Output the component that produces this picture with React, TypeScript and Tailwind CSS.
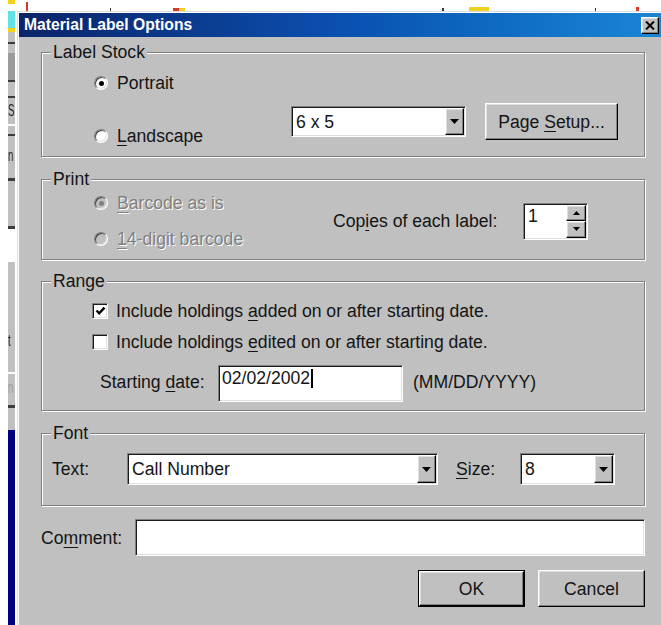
import React from "react";

// Win2000-style bevels
const raised =
  "bg-[#c0c0c0] border border-t-white border-l-white border-b-black border-r-black shadow-[inset_-1px_-1px_0_#808080,inset_1px_1px_0_#dfdfdf]";
const sunken =
  "bg-white border border-t-[#808080] border-l-[#808080] border-b-white border-r-white shadow-[inset_1px_1px_0_#1a1a1a,inset_-1px_-1px_0_#dfdfdf]";
const fieldset =
  "w-[604px] min-w-0 mx-0 border border-[#808080] shadow-[inset_1px_1px_0_#fff,1px_1px_0_#fff]";
const legend = "ml-[9px] px-[2px] leading-[18px] bg-[#c0c0c0]";
const disabledText = "text-[#808080] [text-shadow:1px_1px_0_#fff]";

function Acc({ children }: { children: React.ReactNode }) {
  return <span className="underline underline-offset-[3px] decoration-1">{children}</span>;
}

function Tri({ up = false, small = false }: { up?: boolean; small?: boolean }) {
  const w = small ? 7 : 9;
  const h = small ? 4 : 5;
  return (
    <svg width={w} height={h} viewBox={`0 0 ${w} ${h}`}>
      <polygon
        points={up ? `0,${h} ${w},${h} ${w / 2},0` : `0,0 ${w},0 ${w / 2},${h}`}
        fill="#000"
      />
    </svg>
  );
}

function Radio({
  label,
  checked = false,
  disabled = false,
}: {
  label: React.ReactNode;
  checked?: boolean;
  disabled?: boolean;
}) {
  return (
    <div className="flex items-center h-[18px]">
      <span
        className={`w-[14px] h-[14px] shrink-0 rounded-full border border-t-[#808080] border-l-[#808080] border-b-white border-r-white shadow-[inset_1px_1px_0_#404040,inset_-1px_-1px_0_#dfdfdf] flex items-center justify-center ${
          disabled ? "bg-[#c0c0c0]" : "bg-white"
        }`}
      >
        {checked && (
          <span className={`w-[5px] h-[5px] rounded-full ${disabled ? "bg-[#808080]" : "bg-black"}`} />
        )}
      </span>
      <span className={`ml-[9px] whitespace-nowrap ${disabled ? disabledText : ""}`}>{label}</span>
    </div>
  );
}

function Check({ label, checked = false }: { label: React.ReactNode; checked?: boolean }) {
  return (
    <div className="flex items-center h-[18px]">
      <span className={`w-[16px] h-[16px] shrink-0 flex items-center justify-center ${sunken}`}>
        {checked && (
          <svg width="11" height="10" viewBox="0 0 11 10">
            <polyline points="1.5,4.5 4.2,7.3 9.5,1.6" fill="none" stroke="#000" strokeWidth="2.4" />
          </svg>
        )}
      </span>
      <span className="ml-[8px] whitespace-nowrap">{label}</span>
    </div>
  );
}

function Combo({ value, className }: { value: string; className: string }) {
  return (
    <div className={`flex p-[1px] ${sunken} ${className}`}>
      <div className="flex-1 flex items-center pl-[3px] whitespace-nowrap">{value}</div>
      <div className={`w-[19px] flex items-center justify-center ${raised}`}>
        <Tri />
      </div>
    </div>
  );
}

function Button({
  children,
  isDefault = false,
  className = "",
}: {
  children: React.ReactNode;
  isDefault?: boolean;
  className?: string;
}) {
  if (isDefault) {
    return (
      <div className={`border border-black flex ${className}`}>
        <div className={`flex-1 flex items-center justify-center ${raised}`}>{children}</div>
      </div>
    );
  }
  return (
    <div className={`flex items-center justify-center whitespace-nowrap ${raised} ${className}`}>
      {children}
    </div>
  );
}

// Window partly hidden behind the dialog, left edge
const behind: { cls: string; text?: string; textCls?: string }[] = [
  { cls: "h-[4px] bg-[#f2d21a]" },
  { cls: "h-[7px] bg-white" },
  { cls: "h-[17px] bg-[#62e2e6]" },
  { cls: "h-[4px] bg-[#f2d21a]" },
  { cls: "h-[10px] bg-[#c0c0c0]" },
  { cls: "h-[2px] bg-[#3c3c3c]" },
  { cls: "h-[9px] bg-[#c0c0c0]" },
  { cls: "h-[27px] bg-[#9c9c9c]" },
  { cls: "h-[2px] bg-[#3c3c3c]" },
  { cls: "h-[14px] bg-[#c0c0c0]" },
  { cls: "h-[2px] bg-[#3c3c3c]" },
  { cls: "h-[26px] bg-[#c0c0c0] pt-[4px]", text: "S", textCls: "text-[#222]" },
  { cls: "h-[2px] bg-white" },
  { cls: "h-[8px] bg-[#c0c0c0]" },
  { cls: "h-[2px] bg-[#3c3c3c]" },
  { cls: "h-[42px] bg-[#c0c0c0] pt-[11px]", text: "n", textCls: "text-[#222]" },
  { cls: "h-[3px] bg-[#3c3c3c]" },
  { cls: "h-[45px] bg-[#c0c0c0]" },
  { cls: "h-[3px] bg-[#3c3c3c]" },
  { cls: "h-[33px] bg-white" },
  { cls: "h-[110px] bg-[#c0c0c0] pt-[70px]", text: "t", textCls: "text-[#222]" },
  { cls: "h-[2px] bg-white" },
  { cls: "h-[31px] bg-[#c0c0c0] pt-[5px]", text: "n", textCls: "text-[#9a9a9a]" },
  { cls: "h-[3px] bg-[#3c3c3c]" },
  { cls: "h-[22px] bg-[#c0c0c0]" },
  { cls: "h-[195px] bg-[#000080]" },
];

function LeftStrip() {
  return (
    <div className="w-[17px] shrink-0 flex bg-white">
      <div className="w-[8px]" />
      <div className="w-[7px] flex flex-col overflow-hidden">
        {behind.map((b, i) => (
          <div key={i} className={`shrink-0 overflow-hidden ${b.cls}`}>
            {b.text && (
              <div className={`w-[7px] leading-[18px] text-[16px] scale-x-[0.6] origin-left ${b.textCls}`}>
                {b.text}
              </div>
            )}
          </div>
        ))}
      </div>
      <div className="w-[2px]" />
    </div>
  );
}

function TopStrip() {
  return (
    <div className="h-[11px] shrink-0 bg-white flex items-end">
      <span className="ml-[9px] w-[2px] h-[9px] bg-[#d83a2a]" />
      <span className="ml-[82px] w-[1px] h-[3px] bg-[#333]" />
      <span className="ml-[62px] w-[6px] h-[3px] bg-[#d83a2a]" />
      <span className="w-[6px] h-[3px] bg-[#f0d020]" />
      <span className="ml-[257px] w-[2px] h-[3px] bg-[#333]" />
      <span className="ml-[25px] w-[20px] h-[4px] bg-[#f0d020]" />
      <span className="ml-[106px] w-[1px] h-[3px] bg-[#333]" />
      <span className="ml-[40px] w-[3px] h-[4px] bg-[#d83a2a]" />
    </div>
  );
}

function Dialog() {
  return (
    <div className="flex-1 flex flex-col bg-[#c0c0c0] border-t border-l border-t-[#dcdcdc] border-l-[#dcdcdc] shadow-[inset_1px_1px_0_#fff] pt-[1px] pl-[1px]">
      {/* caption */}
      <div className="h-[24px] shrink-0 flex items-center justify-between pl-[5px] bg-linear-to-r from-[#0a246a] via-[#0a50b0] to-[#1a86d4]">
        <span className="text-white font-bold text-[15.7px] whitespace-nowrap">Material Label Options</span>
        <div className={`w-[18px] h-[17px] mr-[2px] flex items-center justify-center ${raised}`}>
          <svg width="10" height="9" viewBox="0 0 10 9">
            <path d="M1 0.5 L9 8.5 M9 0.5 L1 8.5" stroke="#000" strokeWidth="2" />
          </svg>
        </div>
      </div>

      <div className="flex flex-col pl-[22px] pt-[6px]">
        <fieldset className={fieldset}>
          <legend className={legend}>Label Stock</legend>
          <div className="pl-[52px] pt-[13px] pb-[11px]">
            <Radio checked label="Portrait" />
            <div className="flex items-start mt-[11px]">
              <div className="w-[197px] mt-[24px]">
                <Radio
                  label={
                    <>
                      <Acc>L</Acc>andscape
                    </>
                  }
                />
              </div>
              <Combo value="6 x 5" className="w-[175px] h-[31px] mt-[3px]" />
              <Button className="ml-[19px] w-[133px] h-[37px]">
                Page&nbsp;<Acc>S</Acc>etup...
              </Button>
            </div>
          </div>
        </fieldset>

        <fieldset className={`${fieldset} mt-[13px]`}>
          <legend className={legend}>Print</legend>
          <div className="flex items-center pl-[52px] pt-[6px] pb-[11px]">
            <div className="w-[239px] flex flex-col gap-[18px]">
              <Radio
                checked
                disabled
                label={
                  <>
                    <Acc>B</Acc>arcode as is
                  </>
                }
              />
              <Radio
                disabled
                label={
                  <>
                    <Acc>1</Acc>4-digit barcode
                  </>
                }
              />
            </div>
            <span className="w-[190px] whitespace-nowrap">
              Cop<Acc>i</Acc>es of each label:
            </span>
            <div className={`w-[65px] h-[37px] flex p-[1px] ${sunken}`}>
              <div className="flex-1 pl-[3px] pt-[2px]">1</div>
              <div className="w-[20px] flex flex-col">
                <div className={`flex-1 flex items-center justify-center ${raised}`}>
                  <Tri up small />
                </div>
                <div className={`flex-1 flex items-center justify-center ${raised}`}>
                  <Tri small />
                </div>
              </div>
            </div>
          </div>
        </fieldset>

        <fieldset className={`${fieldset} mt-[12px]`}>
          <legend className={legend}>Range</legend>
          <div className="pl-[50px] pt-[12px] pb-[8px]">
            <Check
              checked
              label={
                <>
                  Include holdings <Acc>a</Acc>dded on or after starting date.
                </>
              }
            />
            <div className="mt-[13px]">
              <Check
                label={
                  <>
                    Include holdings <Acc>e</Acc>dited on or after starting date.
                  </>
                }
              />
            </div>
            <div className="flex items-center mt-[14px] pl-[8px]">
              <span className="w-[118px] whitespace-nowrap mb-[3px]">
                Starting <Acc>d</Acc>ate:
              </span>
              <div className={`w-[185px] h-[37px] pl-[3px] pt-[3px] flex items-start ${sunken}`}>
                <span>02/02/2002</span>
                <span className="ml-[1px] w-[2px] h-[19px] bg-black" />
              </div>
              <span className="ml-[10px] whitespace-nowrap mb-[3px]">(MM/DD/YYYY)</span>
            </div>
          </div>
        </fieldset>

        <fieldset className={`${fieldset} mt-[13px]`}>
          <legend className={legend}>Font</legend>
          <div className="flex items-center pl-[10px] pt-[11px] pb-[20px]">
            <span className="w-[75px]">Text:</span>
            <Combo value="Call Number" className="w-[311px] h-[32px]" />
            <span className="ml-[18px] w-[64px]">
              <Acc>S</Acc>ize:
            </span>
            <Combo value="8" className="w-[95px] h-[32px]" />
          </div>
        </fieldset>

        <div className="w-[604px] flex items-center mt-[13px]">
          <span className="w-[94px] whitespace-nowrap">
            Co<Acc>m</Acc>ment:
          </span>
          <div className={`w-[510px] h-[37px] ${sunken}`} />
        </div>

        <div className="w-[604px] flex justify-end gap-[13px] mt-[14px]">
          <Button isDefault className="w-[107px] h-[37px]">
            OK
          </Button>
          <Button className="w-[107px] h-[37px]">Cancel</Button>
        </div>
      </div>
    </div>
  );
}

export default function App() {
  return (
    <div className="w-[661px] h-[625px] overflow-hidden bg-white flex font-['Liberation_Sans',Arial,sans-serif] text-[17.6px] leading-[18px] text-[#141414]">
      <LeftStrip />
      <div className="flex-1 min-w-0 flex flex-col">
        <TopStrip />
        <Dialog />
      </div>
    </div>
  );
}
